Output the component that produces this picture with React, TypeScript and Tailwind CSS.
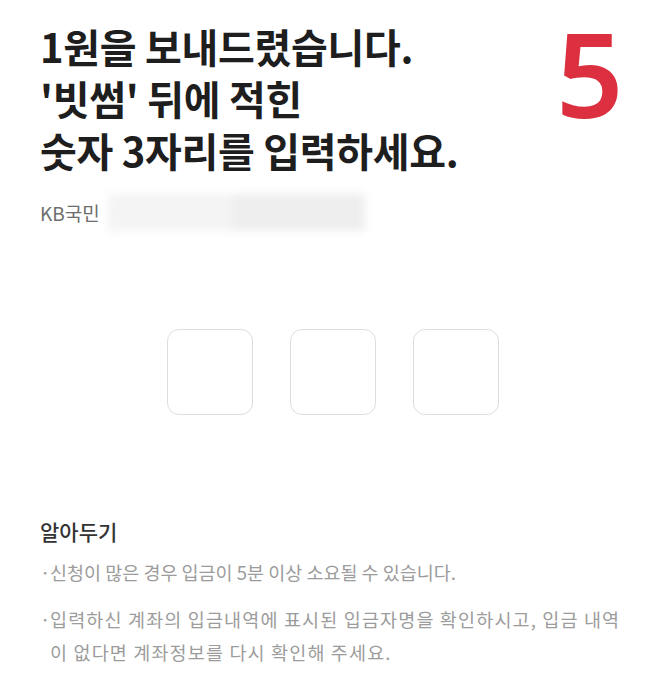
export default function App() {
  const font = { fontFamily: '"Noto Sans CJK KR", "Noto Sans", sans-serif' };
  return (
    <div className="relative min-h-[699px] w-[665px] bg-white" style={font}>
      {/* step number overlay */}
      <div
        className="absolute left-[556px] top-[8px] text-[118px] font-semibold leading-[130px] text-[#dc2f3f]"
        style={{ fontFamily: '"Noto Sans", "Open Sans", sans-serif' }}
      >
        5
      </div>

      <div className="px-10 pt-5">
        <h1 className="text-[40px] font-bold leading-[52px] tracking-[-0.3px] text-[#1e1e1e]">
          1원을 보내드렸습니다.
          <br />
          '빗썸' 뒤에 적힌
          <br />
          숫자 3자리를 입력하세요.
        </h1>

        <div className="mt-[18px] flex h-[37px] items-center">
          <span className="text-[19px] leading-none text-[#6e6e6e]">KB국민</span>
          <div className="ml-2 flex h-[37px] w-[257px] overflow-hidden blur-[4px]">
            <div className="h-full w-[125px] bg-[#f4f4f4]" />
            <div className="h-full flex-1 bg-[#eeeeee]" />
          </div>
        </div>

        {/* code inputs */}
        <div className="mt-[98px] flex justify-center gap-[37px]">
          {[0, 1, 2].map((i) => (
            <div
              key={i}
              className="h-[86px] w-[86px] rounded-[12px] border-[1.5px] border-[#dedede] bg-white"
            />
          ))}
        </div>

        {/* notice */}
        <div className="mt-[101px]">
          <h2 className="text-[21px] leading-[30px] font-medium text-[#333333]">알아두기</h2>
          <ul className="mt-[10px] flex flex-col gap-[14px] text-[18.5px] leading-[33px] text-[#9c9c9c]">
            <li className="flex">
              <span className="w-[10px] shrink-0">·</span>
              <span>신청이 많은 경우 입금이 5분 이상 소요될 수 있습니다.</span>
            </li>
            <li className="flex">
              <span className="w-[10px] shrink-0">·</span>
              <span className="tracking-[1.15px]">
                입력하신 계좌의 입금내역에 표시된 입금자명을 확인하시고, 입금 내역
                <br />이 없다면 계좌정보를 다시 확인해 주세요.
              </span>
            </li>
          </ul>
        </div>
      </div>
    </div>
  );
}
